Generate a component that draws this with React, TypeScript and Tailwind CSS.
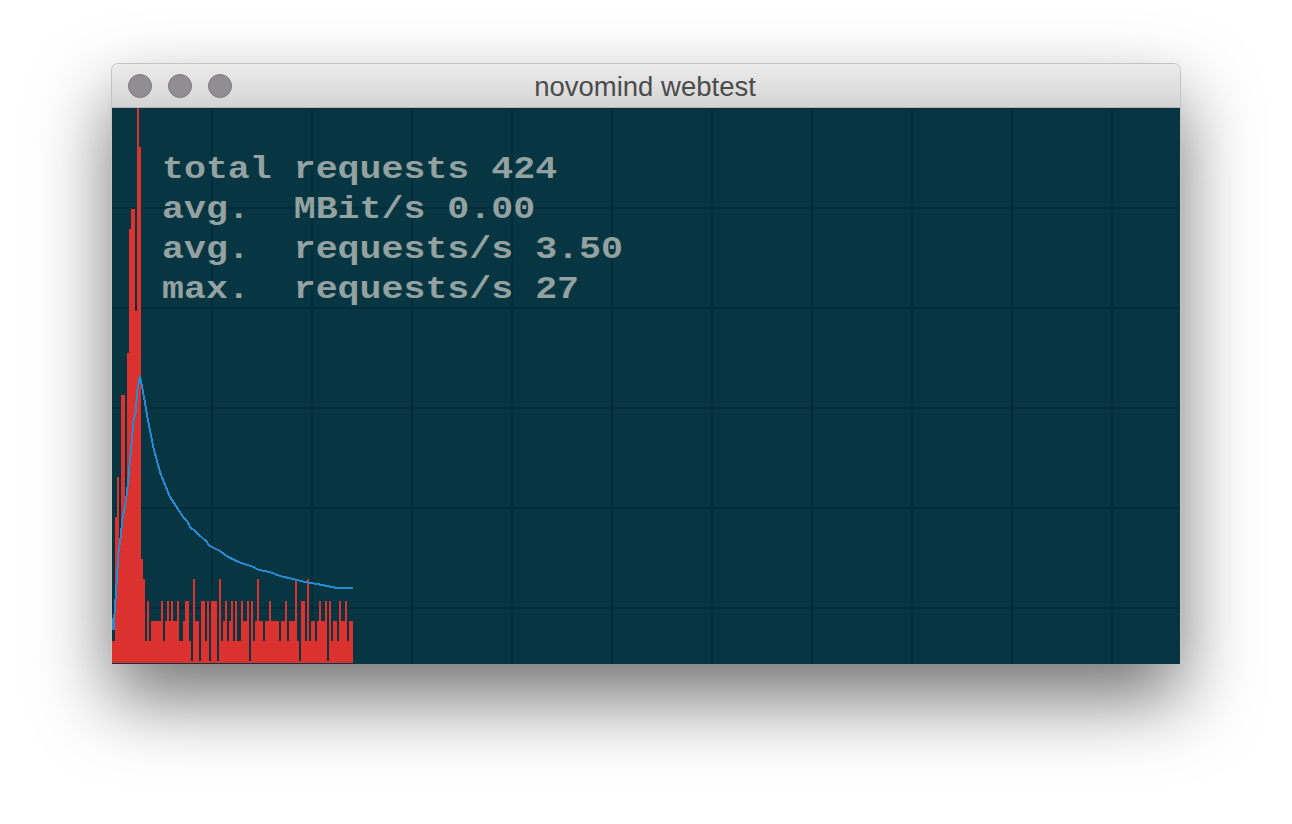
import React from "react";

const a = 661, b = 641, c = 621, d = 601, e = 579;
const tops: number[] = [
  641, 641, 517, 477, 539, 395, 395, 497, 353, 229, 209, 209, 311, 108, 147, 559, e, b,
  d, b, c, c, c, c, c, d, b, c, d, c, d, c, c, d, b, b, c, d, d, b, a, e, c, c, a, d, d, b, d, a, d, d, d, a, e, b, c, d, b,
  c, d, b, d, b, b, d, c, c, d, a, d, b, c, e, c, c, b, c, c, d, c, c, c, c, b, c, c, d, b, c, c, c, e, b, a, d, d, b, e, b, c, c, b, c, d, c, c, d, a, d, b, c, c, b, d, c, c, d, b, c, c,
];

const blue =
  "112,618 113.5,630 115,607 117,577 118.3,553 120.3,540 122.3,520 124.3,510 126.3,498 128.3,480 131,450 133.3,423 135.7,412 137.3,390 140,376 142.3,388 145,403 147.3,417 150,430 153.3,447 156.7,460 160,472 164.3,483 170,497 176.7,507 181.7,515 188.3,523 190,527 198.3,534 206.7,542 210,546 218.3,550 228.3,557 238.3,562 253.3,567 259,570 270,572 280,576 293,579 305,582 317,584 327,586 337,588 353,588";

const lines = ["total requests 424", "avg.  MBit/s 0.00", "avg.  requests/s 3.50", "max.  requests/s 27"];
const vertical = [212, 312, 412, 512, 612, 712, 812, 912, 1012, 1112];
const horizontal = [208, 308, 408, 508, 608];

function Chart() {
  return (
    <svg viewBox="112 108 1068 556" className="block h-full w-full" shapeRendering="crispEdges">
      <g fill="#022c39">
        {vertical.map((x) => (
          <rect key={x} x={x - 1} y={108} width={2} height={556} />
        ))}
        {horizontal.map((y) => (
          <rect key={y} x={112} y={y - 1} width={1068} height={2} />
        ))}
      </g>
      <g fill="#dc322f">
        {tops.map((t, i) => (
          <rect key={i} x={111 + 2 * i} y={t} width={2} height={663 - t} />
        ))}
      </g>
      <polyline points={blue} fill="none" stroke="#268bd2" strokeWidth={2} />
    </svg>
  );
}

export default function App() {
  return (
    <div className="h-[824px] w-full bg-white pl-[111px] pt-[63px]">
      <div className="w-[1070px] overflow-hidden rounded-t-[7px] border border-b-0 border-[#c4c4c4] shadow-[0_35px_75px_0_rgba(0,0,0,0.55)]">
        <div className="grid h-[44px] grid-cols-[1fr_auto_1fr] items-center border-b border-[#b4b4b4] bg-gradient-to-b from-[#ececec] to-[#d4d4d4] px-4">
          <div className="flex gap-4">
            <span className="h-6 w-6 rounded-full border border-[#79787c] bg-[#908e93]" />
            <span className="h-6 w-6 rounded-full border border-[#79787c] bg-[#908e93]" />
            <span className="h-6 w-6 rounded-full border border-[#79787c] bg-[#908e93]" />
          </div>
          <span className="-translate-x-[1px] pt-[2px] font-['Liberation_Sans',Arial,sans-serif] text-[27.5px] leading-none text-[#4c4c4c]">
            novomind webtest
          </span>
          <span />
        </div>
        <div className="relative h-[556px] bg-[#073642]">
          <Chart />
          <div className="absolute left-[50px] top-[42px] origin-top-left scale-y-[0.88] whitespace-pre font-['Liberation_Mono','Courier_New',monospace] text-[36.6px] font-bold leading-[45.45px] text-[#93a1a1]">
            {lines.map((l) => (
              <div key={l}>{l}</div>
            ))}
          </div>
        </div>
      </div>
    </div>
  );
}
